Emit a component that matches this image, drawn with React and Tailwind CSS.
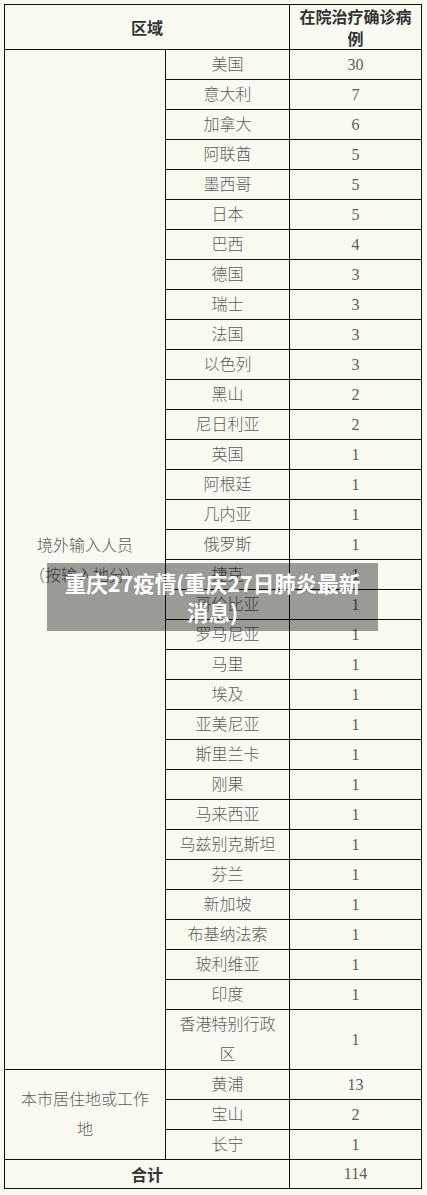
import React from 'react';

const abroad = [
  ['美国', '30'], ['意大利', '7'], ['加拿大', '6'], ['阿联酋', '5'], ['墨西哥', '5'],
  ['日本', '5'], ['巴西', '4'], ['德国', '3'], ['瑞士', '3'], ['法国', '3'],
  ['以色列', '3'], ['黑山', '2'], ['尼日利亚', '2'], ['英国', '1'], ['阿根廷', '1'],
  ['几内亚', '1'], ['俄罗斯', '1'], ['捷克', '1'], ['哥伦比亚', '1'], ['罗马尼亚', '1'],
  ['马里', '1'], ['埃及', '1'], ['亚美尼亚', '1'], ['斯里兰卡', '1'], ['刚果', '1'],
  ['马来西亚', '1'], ['乌兹别克斯坦', '1'], ['芬兰', '1'], ['新加坡', '1'],
  ['布基纳法索', '1'], ['玻利维亚', '1'], ['印度', '1'],
];

const local = [['黄浦', '13'], ['宝山', '2'], ['长宁', '1']];

const cell = 'bg-[#fafaf1] flex items-center justify-center text-center';

const Row = ({ name, value }) => (
  <div className="flex gap-px h-[29px]">
    <div className={`${cell} w-[123px] pt-px`}>{name}</div>
    <div className={`${cell} w-[131px] pt-px`}>{value}</div>
  </div>
);

const App = () => {
  return (
    <div
      className="relative h-[1195px] bg-[#fafaf1] pt-1 pl-1 text-[16px] text-[#5c5c5c]"
      style={{ fontFamily: '"Liberation Serif", "Noto Sans CJK SC", serif' }}
    >
      <div className="w-[418px] bg-[#111] p-px flex flex-col gap-px">
        {/* header */}
        <div className="flex gap-px h-[44px] font-bold text-[#333]" style={{ fontFamily: '"Noto Sans CJK SC", sans-serif' }}>
          <div className={`${cell} w-[284px]`}>区域</div>
          <div className={`${cell} w-[131px] leading-[22px]`}>
            在院治疗确诊病<br />例
          </div>
        </div>

        {/* 境外输入 */}
        <div className="flex gap-px font-light">
          <div className={`${cell} w-[160px] leading-[30px] pt-[3px]`}>
            境外输入人员<br />（按输入地分）
          </div>
          <div className="flex flex-col gap-px">
            {abroad.map(([name, value]) => (
              <Row key={name} name={name} value={value} />
            ))}
            <div className="flex gap-px h-[59px]">
              <div className={`${cell} w-[123px] leading-[30px]`}>
                香港特别行政<br />区
              </div>
              <div className={`${cell} w-[131px]`}>1</div>
            </div>
          </div>
        </div>

        {/* 本市 */}
        <div className="flex gap-px font-light">
          <div className={`${cell} w-[160px] leading-[30px]`}>
            本市居住地或工作<br />地
          </div>
          <div className="flex flex-col gap-px">
            {local.map(([name, value]) => (
              <Row key={name} name={name} value={value} />
            ))}
          </div>
        </div>

        {/* total */}
        <div className="flex gap-px h-[28px]">
          <div className={`${cell} w-[284px] font-bold text-[#333]`} style={{ fontFamily: '"Noto Sans CJK SC", sans-serif' }}>
            合计
          </div>
          <div className={`${cell} w-[131px] font-light`}>114</div>
        </div>
      </div>

      {/* title overlay */}
      <div
        className="absolute left-[47px] top-[563px] w-[331px] h-[68px] bg-[rgba(0,0,0,0.38)] flex items-center justify-center text-center text-white font-bold text-[21.5px] leading-[29px]"
        style={{ fontFamily: '"Noto Sans CJK SC", sans-serif' }}
      >
        <div>
          重庆27疫情(重庆27日肺炎最新<br />消息)
        </div>
      </div>
    </div>
  );
};

export default App;
